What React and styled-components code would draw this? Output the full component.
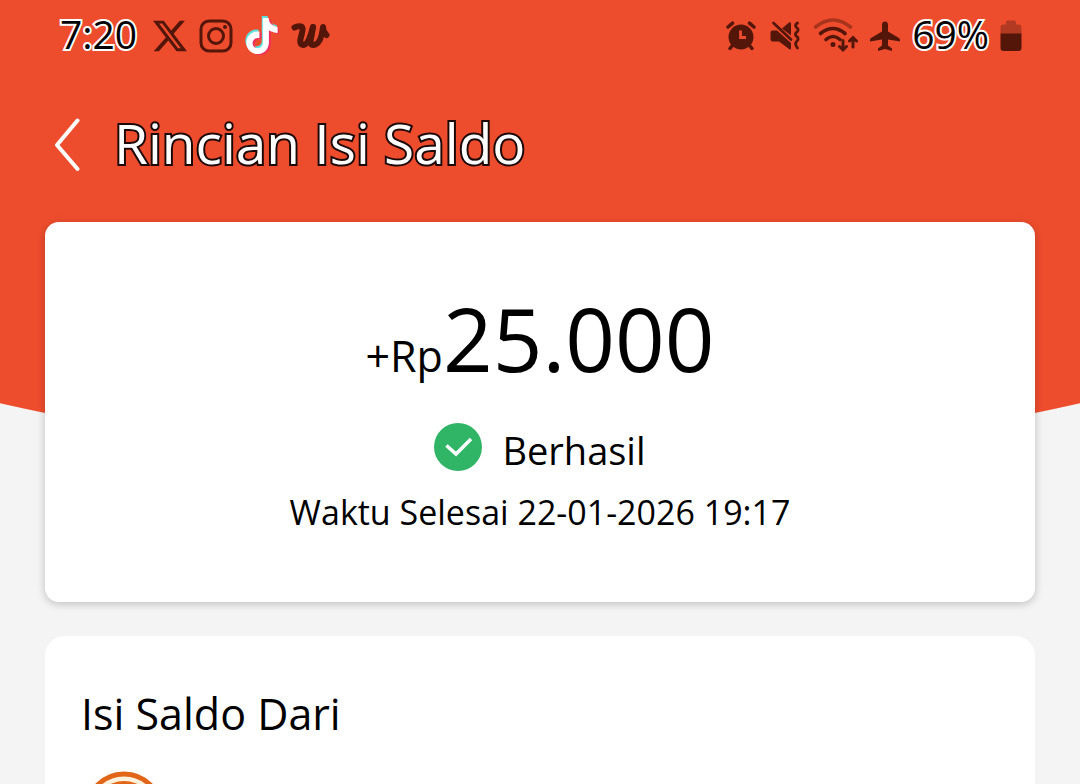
import styled, { createGlobalStyle } from "styled-components";
import { SiTiktok, SiX } from "react-icons/si";

const GlobalStyle = createGlobalStyle`
  * {
    box-sizing: border-box;
  }

  body {
    margin: 0;
    background-color: #f4f4f4;
    font-family: "Open Sans", "Noto Sans", sans-serif;
    color: #000;
  }
`;

const Wrapper = styled.div`
  height: 100vh;
  overflow: hidden;
  display: flex;
  flex-direction: column;
  background: radial-gradient(
    circle 2450px at 50% -1986px,
    #ee4d2d calc(100% - 1px),
    #f4f4f4 100%
  );
`;

const StatusBar = styled.div`
  display: flex;
  justify-content: space-between;
  align-items: center;
  height: 72px;
  flex-shrink: 0;
  padding: 0 58px 0 60px;
  color: #55160a;
`;

const StatusGroup = styled.div`
  display: flex;
  align-items: center;
  gap: ${(props) => props.$gap}px;

  svg {
    display: block;
    flex-shrink: 0;
  }
`;

const StatusText = styled.span`
  padding-bottom: 4px;
  font-size: 39px;
  line-height: 40px;
  color: #000;
  -webkit-text-stroke: 4px #fff;
  paint-order: stroke fill;
`;

const ClockText = styled(StatusText)`
  margin-right: 4px;
`;

const Header = styled.header`
  display: flex;
  align-items: center;
  gap: 32px;
  height: 150px;
  flex-shrink: 0;
  padding: 0 52px 4px;
`;

const BackButton = styled.button`
  display: flex;
  padding: 0;
  border: none;
  background: none;
  cursor: pointer;
`;

const Title = styled.h1`
  margin: 0;
  padding-bottom: 4px;
  font-size: 55px;
  line-height: 72px;
  font-weight: 400;
  color: #fff;
  -webkit-text-stroke: 4px #1c0805;
  paint-order: stroke fill;
`;

const Content = styled.main`
  display: flex;
  flex-direction: column;
  gap: 34px;
  padding: 0 45px;
`;

const SummaryCard = styled.section`
  display: flex;
  flex-direction: column;
  align-items: center;
  padding: 56px 36px 66px;
  border-radius: 14px;
  background-color: #fff;
  box-shadow: 0 2px 8px rgba(0, 0, 0, 0.22);
`;

const Amount = styled.p`
  margin: 0;
  font-size: 87px;
  line-height: 120px;
`;

const Currency = styled.span`
  font-size: 43px;
  line-height: 1;
`;

const Status = styled.div`
  display: flex;
  align-items: flex-start;
  gap: 20px;
  margin-top: 25px;
  font-size: 38px;
  line-height: 54px;
`;

const FinishedAt = styled.p`
  margin: 11px 0 0;
  font-size: 34px;
  line-height: 48px;
`;

const SourceCard = styled.section`
  padding: 48px 36px;
  border-radius: 20px;
  background-color: #fff;
`;

const SourceTitle = styled.h2`
  margin: 0 0 27px;
  font-size: 43px;
  line-height: 60px;
  font-weight: 400;
`;

const SourceLogo = styled.svg`
  display: block;
  margin-left: 3px;
`;

function InstagramIcon() {
  return (
    <svg width="34" height="34" viewBox="0 0 34 34" fill="none" stroke="currentColor" strokeWidth="3">
      <rect x="2" y="2" width="30" height="30" rx="8" />
      <circle cx="17" cy="17" r="7.5" />
      <circle cx="26" cy="8" r="2" fill="currentColor" stroke="none" />
    </svg>
  );
}

function TiktokIcon() {
  return (
    <svg width="34" height="40" viewBox="0 0 34 40">
      <SiTiktok x="-2" y="0" size={36} color="#5fe0dc" />
      <SiTiktok x="1" y="3" size={36} color="#f0305c" />
      <SiTiktok x="-1" y="2" size={36} color="#fff" />
    </svg>
  );
}

function WattpadIcon() {
  return (
    <svg width="40" height="26" viewBox="0 0 40 26" fill="none" stroke="currentColor" strokeLinecap="round" strokeLinejoin="round">
      <path d="M3.5 4.5 Q6 3 10 3.5 Q12.500 4 11 10 L9.500 16 Q8.500 22 12.500 22 Q17.500 21.500 22 4" strokeWidth="6" />
      <path d="M22 4 L20.500 13 Q18 22 22.500 22 Q30 21.500 32 4 Q32 9 35.500 12" strokeWidth="6" />
    </svg>
  );
}

function AlarmIcon() {
  return (
    <svg width="30" height="30" viewBox="0 0 30 30" fill="none" stroke="currentColor" strokeLinecap="round">
      <circle cx="15" cy="16" r="12.5" fill="currentColor" stroke="none" />
      <path d="M2 6 L6.5 2.2 M28 6 L23.5 2.2 M6 25 L4 27.5 M24 25 L26 27.5" strokeWidth="3.5" />
      <path d="M14.5 9.5 V16.5 H20" stroke="#ee4d2d" strokeWidth="2.8" strokeLinecap="butt" />
    </svg>
  );
}

function MuteIcon() {
  return (
    <svg width="32" height="32" viewBox="0 0 32 32" fill="currentColor">
      <path d="M3.5 10.5 H8 L22 23 V29 Q21 30 20 29 L10 21.5 H3.5 Q1.5 21.5 1.5 19.5 V12.5 Q1.5 10.5 3.5 10.5 Z" />
      <path d="M13 8.5 L20 2.5 Q22 1.5 22 3.5 V15.5 Z" />
      <path
        d="M4.5 3 L22 19.5 M28.5 3 Q25 5.5 27.5 7.5 Q30.5 9.5 28 12 Q25 14 27.5 16.2 Q30.5 18.5 28 21 Q25 23.5 28.5 28"
        fill="none"
        stroke="currentColor"
        strokeWidth="2.8"
        strokeLinecap="round"
      />
    </svg>
  );
}

function WifiIcon() {
  return (
    <svg width="44" height="36" viewBox="1 0 44 36" fill="none" stroke="currentColor" strokeWidth="3.6" strokeLinecap="round">
      <path d="M2.5 9 Q20 -5 37.5 9" opacity="0.45" />
      <path d="M7.5 15.5 Q20 5.5 32 15.5" />
      <path d="M13 21.5 Q20 15.5 27 21.5" />
      <circle cx="20" cy="26.5" r="2.5" fill="currentColor" stroke="none" />
      <path d="M30 22.5 V32 M26.5 28.5 L30 32 L33.5 28.5 M40 29 V20 M36.5 23 L40 19.5 L43.5 23" strokeWidth="3" />
    </svg>
  );
}

function PlaneIcon() {
  return (
    <svg width="32" height="32" viewBox="0 0 32 32" fill="currentColor">
      <path d="M16 1.5 Q19 1.5 19 5 V11.5 L30 18 Q31.5 19 31 21.5 L19 19.5 V25.5 L23 28.5 V31 L16 29 L9 31 V28.5 L13 25.5 V19.5 L1 21.5 Q0.5 19 2 18 L13 11.5 V5 Q13 1.5 16 1.5 Z" />
    </svg>
  );
}

function BatteryIcon() {
  return (
    <svg width="22" height="32" viewBox="0 0 22 32">
      <path d="M7.5 0.5 H14.5 Q16 0.5 16 2 V4.5 H18.5 Q21.5 4.5 21.5 7.5 V14 H0.5 V7.5 Q0.5 4.5 3.5 4.5 H6 V2 Q6 0.5 7.5 0.5 Z" fill="#b33a22" />
      <path d="M0.5 13.5 H21.5 V28 Q21.5 31 18.5 31 H3.5 Q0.5 31 0.5 28 Z" fill="currentColor" />
    </svg>
  );
}

function BackIcon() {
  return (
    <svg width="30" height="54" viewBox="0 0 30 54" fill="none">
      <path d="M25.5 2.5 L5 27 L25.5 51" stroke="#fff" strokeWidth="4" strokeLinecap="round" strokeLinejoin="round" />
    </svg>
  );
}

function SuccessIcon() {
  return (
    <svg width="48" height="48" viewBox="0 0 48 48" fill="none">
      <circle cx="24" cy="24" r="24" fill="#30b566" />
      <path d="M12.5 22.5 L22 31 L37 16" stroke="#fff" strokeWidth="3.5" />
    </svg>
  );
}

export default function App() {
  return (
    <>
      <GlobalStyle />
      <Wrapper>
        <StatusBar>
          <StatusGroup $gap={12}>
            <ClockText>7:20</ClockText>
            <SiX size={34} />
            <InstagramIcon />
            <TiktokIcon />
            <WattpadIcon />
          </StatusGroup>
          <StatusGroup $gap={11}>
            <StatusGroup $gap={13}>
              <AlarmIcon />
              <MuteIcon />
              <WifiIcon />
            </StatusGroup>
            <PlaneIcon />
            <StatusText>69%</StatusText>
            <BatteryIcon />
          </StatusGroup>
        </StatusBar>

        <Header>
          <BackButton type="button" aria-label="Kembali">
            <BackIcon />
          </BackButton>
          <Title>Rincian Isi Saldo</Title>
        </Header>

        <Content>
          <SummaryCard>
            <Amount>
              <Currency>+Rp</Currency>25.000
            </Amount>
            <Status>
              <SuccessIcon />
              Berhasil
            </Status>
            <FinishedAt>Waktu Selesai 22-01-2026 19:17</FinishedAt>
          </SummaryCard>

          <SourceCard>
            <SourceTitle>Isi Saldo Dari</SourceTitle>
            <SourceLogo width="80" height="80" viewBox="0 0 80 80">
              <circle cx="40" cy="40" r="37" fill="#fff1dc" stroke="#e2661a" strokeWidth="5" />
              <circle cx="40" cy="40" r="30" fill="#e2661a" />
            </SourceLogo>
          </SourceCard>
        </Content>
      </Wrapper>
    </>
  );
}
